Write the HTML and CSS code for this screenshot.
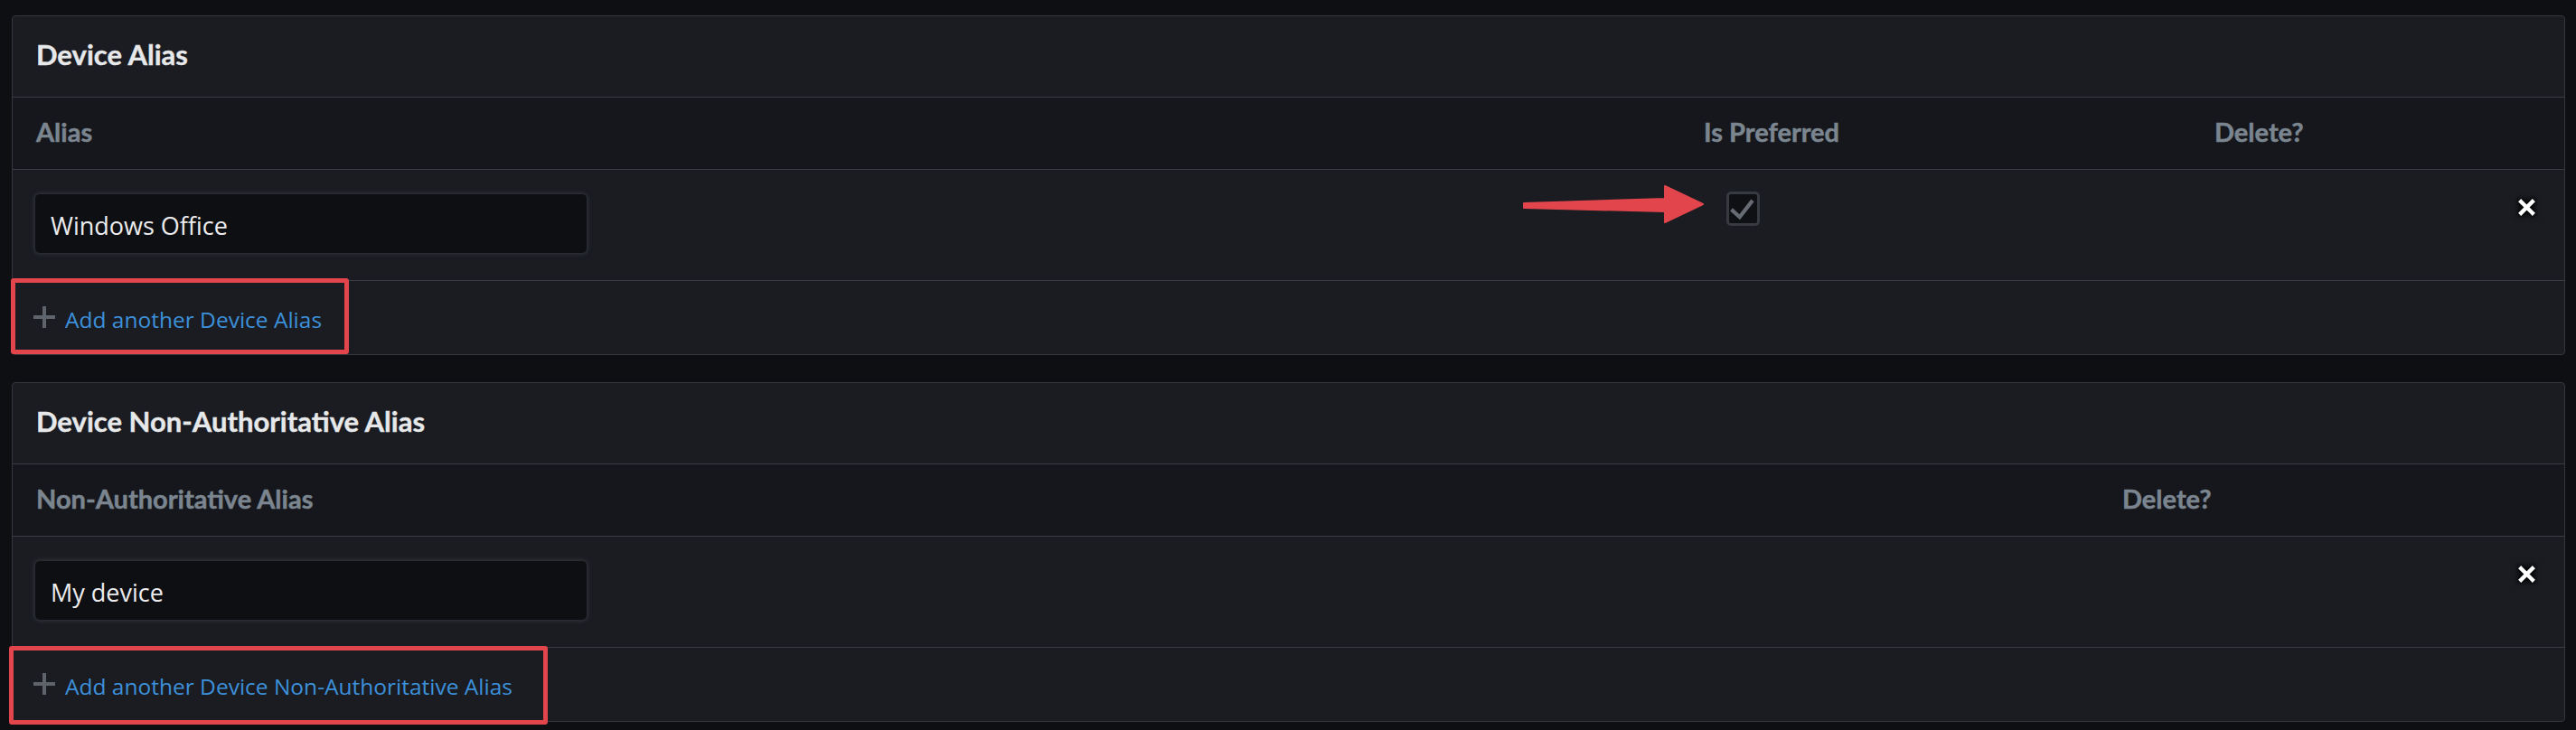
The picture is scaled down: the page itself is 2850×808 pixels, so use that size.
FILE: index.html
```html
<!DOCTYPE html>
<html lang="en">
<head>
<meta charset="utf-8">
<title>Device Alias</title>
<link rel="stylesheet" href="styles.css">
</head>
<body>
<main class="page">
  <section class="panel">
    <div class="panel-title">Device Alias</div>
    <div class="row col-head cols-alias">
      <div>Alias</div>
      <div>Is Preferred</div>
      <div>Delete?</div>
    </div>
    <div class="row body-row cols-alias">
      <div class="field">Windows Office</div>
      <div class="check-cell">
        <span class="checkbox">
          <svg viewBox="0 0 37 37" width="31" height="31" aria-hidden="true"><path d="M3 19 L14 29 L31 7" fill="none" stroke="#676b74" stroke-width="5" stroke-linejoin="miter"/></svg>
        </span>
      </div>
      <div class="del-cell">
        <svg class="del-x" viewBox="0 0 20 20" width="21" height="21" aria-hidden="true"><path d="M4 4 L16 16 M16 4 L4 16" stroke="#ffffff" stroke-width="4.2" stroke-linecap="square"/></svg>
      </div>
      <svg class="arrow" viewBox="0 0 204 46" width="204" height="46" aria-hidden="true"><polygon points="2,22 158,17 158,3 200,23 158,43 158,31 2,27" fill="#e2464c" stroke="#e2464c" stroke-width="2" stroke-linejoin="round"/></svg>
    </div>
    <div class="panel-foot">
      <a class="add-link" href="#">
        <svg class="plus" viewBox="0 0 26 26" width="26" height="26" aria-hidden="true"><path d="M13 1 V25 M1 13 H25" stroke="#5f636c" stroke-width="4"/></svg>
        <span>Add another Device Alias</span>
      </a>
      <span class="annot annot-one"></span>
    </div>
  </section>

  <section class="panel">
    <div class="panel-title">Device Non-Authoritative Alias</div>
    <div class="row col-head cols-non">
      <div>Non-Authoritative Alias</div>
      <div>Delete?</div>
    </div>
    <div class="row body-row cols-non">
      <div class="field">My device</div>
      <div class="del-cell">
        <svg class="del-x" viewBox="0 0 20 20" width="21" height="21" aria-hidden="true"><path d="M4 4 L16 16 M16 4 L4 16" stroke="#ffffff" stroke-width="4.2" stroke-linecap="square"/></svg>
      </div>
    </div>
    <div class="panel-foot">
      <a class="add-link" href="#">
        <svg class="plus" viewBox="0 0 26 26" width="26" height="26" aria-hidden="true"><path d="M13 1 V25 M1 13 H25" stroke="#5f636c" stroke-width="4"/></svg>
        <span>Add another Device Non-Authoritative Alias</span>
      </a>
      <span class="annot annot-two"></span>
    </div>
  </section>
</main>
</body>
</html>
```

FILE: styles.css
```css
* { box-sizing: border-box; }

html, body {
  margin: 0;
  background: #0e0f13;
}

body {
  width: 2850px;
  height: 808px;
  overflow: hidden;
  font-family: "Open Sans", "Liberation Sans", sans-serif;
}

.page {
  display: flex;
  flex-direction: column;
  gap: 30.5px;
  padding: 17px 12px 0 13px;
}

.panel {
  background: #1a1c22;
  border: 1px solid #33363c;
  border-radius: 4px;
}

.panel-title {
  height: 89.5px;
  display: flex;
  align-items: center;
  padding-left: 26px;
  padding-bottom: 4px;
  border-bottom: 1px solid #3a3d43;
  font-family: "Lato", "Liberation Sans", sans-serif;
  font-weight: 700;
  font-size: 31px;
  color: #e7e8ea;
  -webkit-text-stroke: 0.4px #e7e8ea;
}

.row {
  display: grid;
  padding: 0 31px 0 25px;
  border-bottom: 1px solid #3a3d43;
}

.cols-alias { grid-template-columns: 1845px 565px 1fr; }
.cols-non { grid-template-columns: 2308px 1fr; }

.col-head {
  height: 80.5px;
  align-items: center;
  background: #15171c;
  font-family: "Lato", "Liberation Sans", sans-serif;
  font-weight: 700;
  font-size: 29px;
  color: #7b858f;
  -webkit-text-stroke: 0.5px #7b858f;
  padding-left: 26px;
  padding-bottom: 4px;
}

.body-row {
  position: relative;
  height: 123px;
  align-items: start;
  padding-top: 27px;
}

.field {
  width: 610px;
  height: 65px;
  display: flex;
  align-items: center;
  padding-left: 17px;
  padding-top: 3px;
  background: #0e0f13;
  border-radius: 5px;
  box-shadow: 0 0 5px 1px rgba(110, 112, 120, 0.35);
  color: #ececee;
  font-size: 27px;
}

.check-cell {
  padding-left: 26px;
  margin-top: -3px;
}

.checkbox {
  width: 37px;
  height: 38px;
  display: flex;
  align-items: center;
  justify-content: center;
  background: #0f1014;
  border: 3px solid #373a41;
  border-radius: 5px;
}

.del-cell {
  justify-self: end;
  padding-top: 4px;
}

.del-x {
  display: block;
  filter: drop-shadow(0 0 3px #000) drop-shadow(0 0 2px #000);
}

.arrow {
  position: absolute;
  left: 1670px;
  top: 15px;
}

.panel-foot {
  position: relative;
  height: 80.5px;
  display: flex;
  align-items: center;
  padding-left: 22px;
  padding-top: 5px;
}

.add-link {
  display: flex;
  align-items: center;
  gap: 10px;
  color: #3d90da;
  text-decoration: none;
  font-size: 24.5px;
}

.plus {
  display: block;
  margin-top: -5px;
}

.annot {
  position: absolute;
  border: 5px solid #e2464c;
  border-radius: 3px;
}

.annot-one {
  left: -2px;
  top: -3px;
  width: 374px;
  height: 84px;
}

.annot-two {
  left: -4px;
  top: -2px;
  width: 596px;
  height: 87px;
}
```
